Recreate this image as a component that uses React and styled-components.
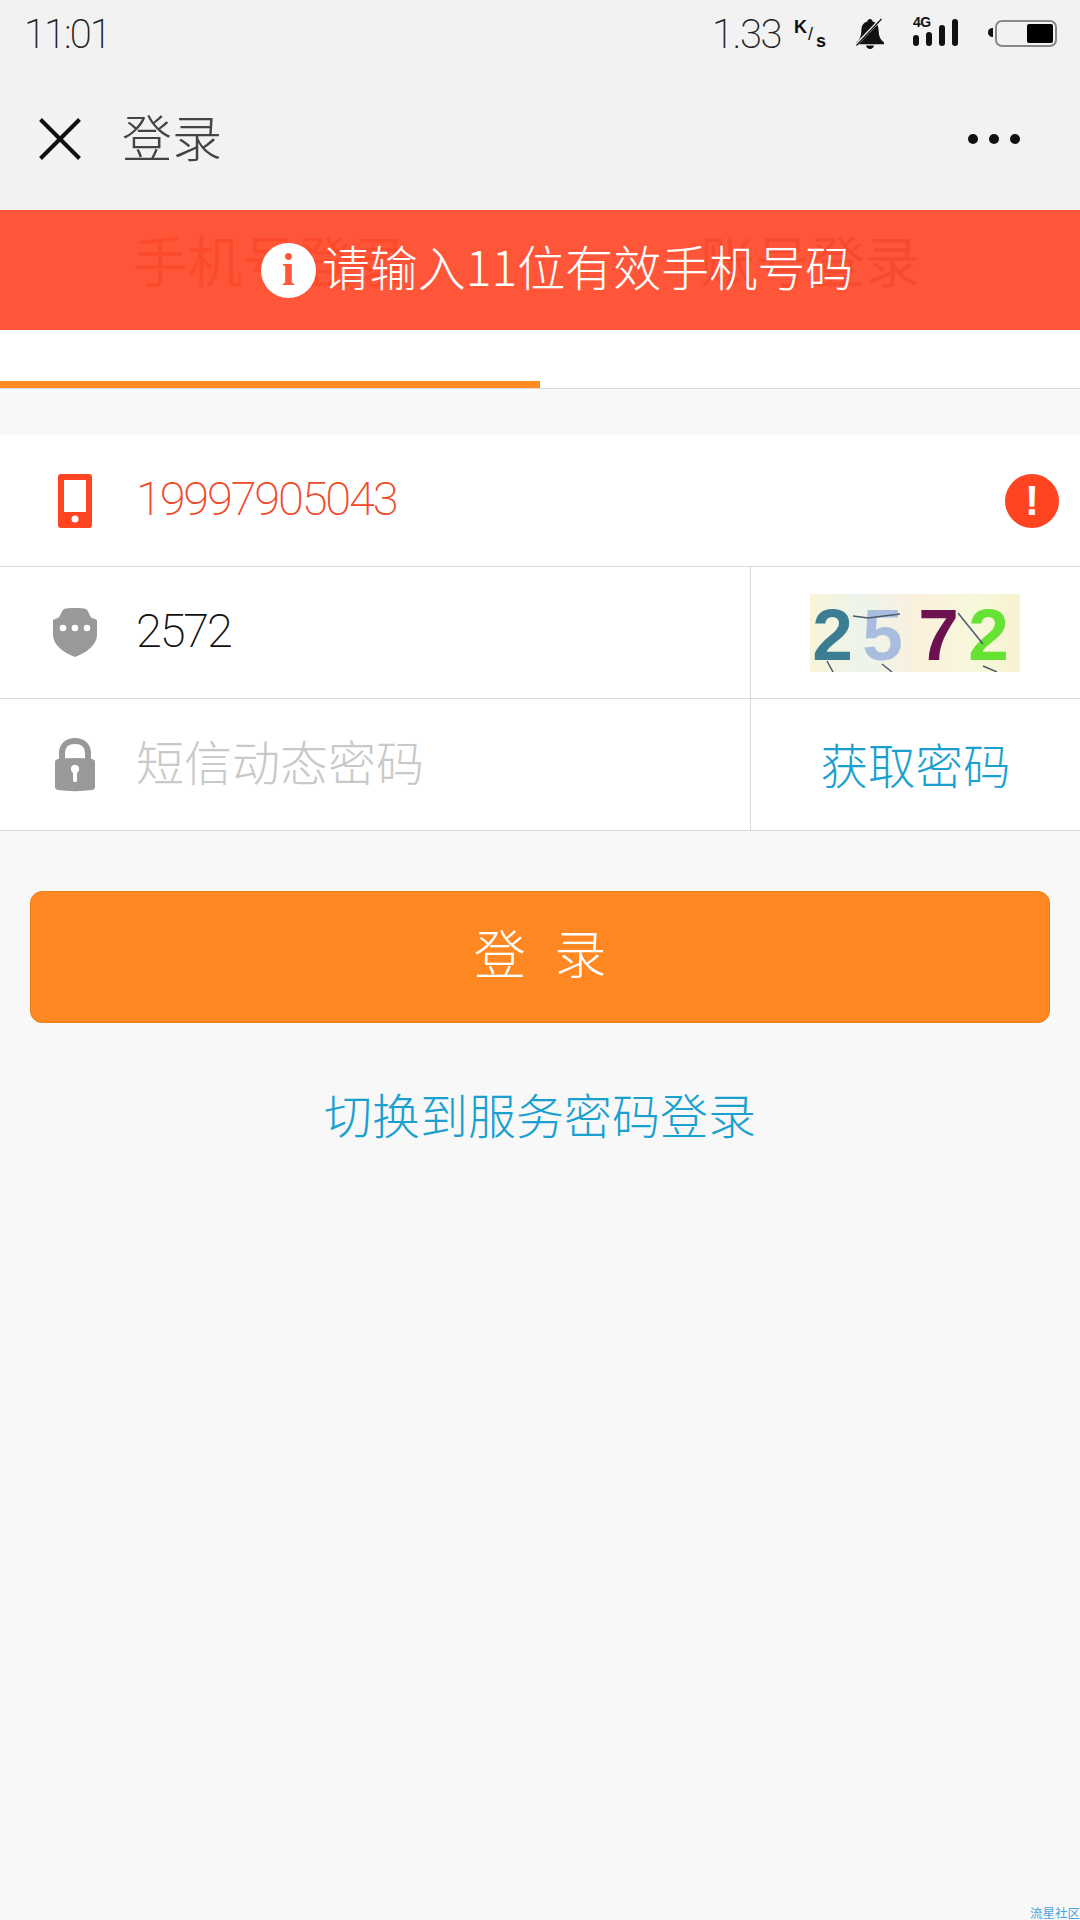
import React from "react";
import styled, { createGlobalStyle } from "styled-components";

const CJK = `"Noto Sans CJK SC", "Noto Sans", sans-serif`;
const NUM = `Roboto, "Liberation Sans", sans-serif`;

const Global = createGlobalStyle`
  html, body { margin: 0; padding: 0; background: #f8f8f8; }
  * { box-sizing: border-box; }
`;

const Page = styled.div`
  width: 1080px;
  height: 1920px;
  position: relative;
  overflow: hidden;
  background: #f8f8f8;
  font-family: ${CJK};
`;

const Header = styled.header`
  height: 210px;
  background: #f2f2f2;
`;

const StatusBar = styled.div`
  height: 68px;
  padding: 0 23px 0 24px;
  display: flex;
  align-items: center;
  justify-content: space-between;
`;

const Clock = styled.span`
  font-family: ${NUM};
  font-weight: 200;
  font-size: 40px;
  letter-spacing: -2px;
  color: #222;
`;

const StatusGroup = styled.div`
  display: flex;
  align-items: center;
`;

const Speed = styled.span`
  font-family: ${NUM};
  font-weight: 200;
  font-size: 40px;
  letter-spacing: -1.5px;
  color: #222;
  margin-right: 13px;
`;

const Unit = styled.span`
  position: relative;
  width: 36px;
  height: 30px;
  margin-right: 25px;
  font-family: "Liberation Sans", sans-serif;
  font-weight: 700;
  color: #111;
`;

const UnitPart = styled.span`
  position: absolute;
  left: ${(p) => p.$x}px;
  top: ${(p) => p.$y}px;
  font-size: 18px;
  line-height: 18px;
  font-weight: ${(p) => p.$w || 700};
`;

const Signal = styled.div`
  position: relative;
  width: 47px;
  height: 32px;
  margin: 0 35px 8px 28px;
  display: flex;
  align-items: flex-end;
  gap: 7px;
`;

const SignalBar = styled.i`
  display: block;
  width: 6px;
  height: ${(p) => p.$h}px;
  border-radius: 3px;
  background: #111;
`;

const FourG = styled.span`
  position: absolute;
  left: 0;
  top: 1px;
  font-family: "Liberation Sans", sans-serif;
  font-weight: 700;
  font-size: 14px;
  line-height: 14px;
  letter-spacing: -0.5px;
  color: #111;
`;

const Battery = styled.div`
  position: relative;
  width: 62px;
  height: 27px;
  margin-bottom: 2px;
  padding: 2px;
  border: 2px solid #888;
  border-radius: 7px;
  display: flex;
  justify-content: flex-end;

  &::before {
    content: "";
    position: absolute;
    left: -9px;
    top: 6px;
    width: 5px;
    height: 9px;
    border-radius: 5px 0 0 5px;
    background: #111;
  }
`;

const BatteryFill = styled.div`
  width: 26px;
  height: 100%;
  border-radius: 2px;
  background: #000;
`;

const NavBar = styled.nav`
  height: 142px;
  padding: 0 60px 0 39px;
  display: flex;
  align-items: center;
`;

const Title = styled.h1`
  margin: -9px 0 0 41px;
  flex: 1;
  font-size: 50px;
  font-weight: 300;
  line-height: 60px;
  color: #444;
`;

const Dots = styled.div`
  display: flex;
  gap: 11px;
`;

const Dot = styled.i`
  display: block;
  width: 10px;
  height: 10px;
  border-radius: 50%;
  background: #111;
`;

const Tabs = styled.div`
  height: 179px;
  background: #fff;
  border-bottom: 1px solid #dcdcdc;
  display: flex;
`;

const Tab = styled.div`
  width: 540px;
  height: 178px;
  padding-top: 9px;
  text-align: center;
  font-size: 55px;
  line-height: 78px;
  font-weight: 400;
  color: ${(p) => (p.$active ? "#b83000" : "#444")};
  border-bottom: ${(p) => (p.$active ? "7px solid #ff8a22" : "0")};
`;

const Toast = styled.div`
  position: absolute;
  left: 0;
  top: 210px;
  width: 1080px;
  height: 120px;
  background: rgba(255, 77, 46, 0.95);
  display: flex;
  align-items: center;
  justify-content: center;
  gap: 6px;
  padding-left: 34px;
`;

const ToastIcon = styled.span`
  width: 55px;
  height: 55px;
  border-radius: 50%;
  background: #fff;
  color: #ff5638;
  display: flex;
  align-items: center;
  justify-content: center;
  font-family: "Liberation Serif", serif;
  font-weight: 700;
  font-size: 46px;
  line-height: 1;
`;

const ToastText = styled.span`
  margin-top: -11px;
  font-size: 48px;
  font-weight: 300;
  line-height: 60px;
  color: #fff;
`;

const Form = styled.section`
  margin-top: 46px;
  background: #fff;
`;

const Row = styled.div`
  height: 132px;
  border-bottom: 1px solid #d9d9d9;
  display: flex;
  align-items: stretch;
`;

const IconCell = styled.div`
  width: 136px;
  padding-left: 14px;
  display: flex;
  align-items: center;
  justify-content: center;
  flex: none;
`;

const Value = styled.div`
  flex: 1;
  display: flex;
  align-items: center;
  font-family: ${(p) => (p.$cjk ? CJK : NUM)};
  font-weight: 200;
  font-size: ${(p) => (p.$cjk ? "48px" : "47px")};
  letter-spacing: ${(p) => (p.$cjk ? "0" : "-2.2px")};
  padding-bottom: ${(p) => (p.$cjk ? "10px" : "4px")};
  color: ${(p) => p.$color};
`;

const SideCell = styled.div`
  width: 330px;
  flex: none;
  border-left: 1px solid #d9d9d9;
  display: flex;
  align-items: center;
  justify-content: center;
`;

const AlertBadge = styled.span`
  width: 54px;
  height: 54px;
  margin-right: 21px;
  align-self: center;
  flex: none;
  border-radius: 50%;
  background: #ff4422;
  color: #fff;
  display: flex;
  align-items: center;
  justify-content: center;
  font-family: "Liberation Sans", sans-serif;
  font-weight: 700;
  font-size: 42px;
  line-height: 1;
`;

const Captcha = styled.div`
  position: relative;
  width: 210px;
  height: 78px;
  margin-right: 2px;
  padding-top: 3px;
  background: linear-gradient(90deg, #f8f4d8, #edf4ec 24%, #fbf0dc 52%, #f6f8dc 78%, #f8f2cf);
  display: flex;
  align-items: center;
  justify-content: flex-start;
`;

const CaptchaDigit = styled.span`
  width: ${(p) => p.$w}px;
  flex: none;
  text-align: center;
  font-family: "Liberation Sans", sans-serif;
  font-weight: 700;
  font-size: 73px;
  line-height: 73px;
  color: ${(p) => p.$color};
`;

const CaptchaNoise = styled.svg`
  position: absolute;
  inset: 0;
`;

const SmsLink = styled.span`
  margin-top: -2px;
  font-size: 47.500px;
  font-weight: 300;
  line-height: 60px;
  color: #1aa0cf;
`;

const Actions = styled.div`
  padding: 60px 30px 0;
  display: flex;
  flex-direction: column;
  align-items: stretch;
`;

const LoginButton = styled.button`
  height: 132px;
  padding: 0 0 12px;
  border: 1px solid #e8801c;
  border-radius: 12px;
  background: #ff8822;
  color: #fff;
  font-family: ${CJK};
  font-weight: 300;
  font-size: 52px;
  word-spacing: 17px;
  white-space: pre;
`;

const SwitchLink = styled.div`
  margin-top: 59px;
  text-align: center;
  font-size: 48px;
  font-weight: 300;
  line-height: 62px;
  color: #1aa0cf;
`;

const Watermark = styled.span`
  position: absolute;
  right: 0;
  bottom: 0;
  font-size: 12.500px;
  line-height: 14px;
  color: #4aa3e0;
`;

const CloseIcon = () => (
  <svg width="42" height="42" viewBox="0 0 42 42">
    <path d="M1.500 1.500 40.500 40.500M40.500 1.500 1.500 40.500" stroke="#111" strokeWidth="4" fill="none" />
  </svg>
);

const BellOffIcon = () => (
  <svg width="30" height="32" viewBox="0 0 30 32">
    <path
      d="M15 1c-1.500 0-2.500 1-2.600 2.400C8 4.600 6.400 8 6.400 12.500c0 5.500-1.800 9.500-5.400 12v1.700h28v-1.700c-3.600-2.500-5.400-6.500-5.400-12 0-4.500-1.600-7.900-6-9.100C17.500 2 16.500 1 15 1z"
      fill="#111"
    />
    <path d="M11 27.500h8c-.4 2-2 3.500-4 3.500s-3.600-1.500-4-3.500z" fill="#111" />
    <path d="M1 27 26 1" stroke="#f2f2f2" strokeWidth="3" />
    <path d="M1.500 27.500 26.500 1" stroke="#111" strokeWidth="1.200" />
  </svg>
);

const PhoneIcon = () => (
  <svg width="34" height="54" viewBox="0 0 34 54">
    <rect x="0" y="0" width="34" height="54" rx="3" fill="#ff4422" />
    <rect x="6" y="6" width="22" height="32" fill="#fff" />
    <circle cx="17" cy="45" r="3.500" fill="#fff" />
  </svg>
);

const ShieldIcon = () => (
  <svg width="44" height="49" viewBox="0 0 44 49">
    <path
      d="M22 0C27 0 31 0 33 1C36 3 36 8 39 10C41 11 43 11 44 12V27C44 37 33 45 22 49C11 45 0 37 0 27V12C1 11 3 11 5 10C8 8 8 3 11 1C13 0 17 0 22 0Z"
      fill="#999"
    />
    <circle cx="10" cy="20" r="3.300" fill="#fff" />
    <circle cx="22" cy="20" r="3.300" fill="#fff" />
    <circle cx="34" cy="20" r="3.300" fill="#fff" />
  </svg>
);

const LockIcon = () => (
  <svg width="40" height="54" viewBox="0 0 40 54">
    <path d="M7 24V15C7 7 13 3 20 3s13 4 13 12v9" fill="none" stroke="#999" strokeWidth="6" />
    <path
      d="M3 21c11-1.500 23-1.500 34 0 2 .3 3 1.500 3 3v25c0 1.500-1 2.700-3 3-11 1.500-23 1.500-34 0-2-.3-3-1.500-3-3V24c0-1.500 1-2.700 3-3z"
      fill="#999"
    />
    <circle cx="20" cy="31" r="4.200" fill="#fff" />
    <rect x="18" y="32" width="4" height="12" rx="1.500" fill="#fff" />
  </svg>
);

export default function App() {
  return (
    <Page>
      <Global />
      <Header>
        <StatusBar>
          <Clock>11:01</Clock>
          <StatusGroup>
            <Speed>1.33</Speed>
            <Unit>
              <UnitPart $x={0} $y={-1}>K</UnitPart>
              <UnitPart $x={14} $y={6} $w={400}>/</UnitPart>
              <UnitPart $x={22} $y={13}>s</UnitPart>
            </Unit>
            <BellOffIcon />
            <Signal>
              <FourG>4G</FourG>
              <SignalBar $h={11} />
              <SignalBar $h={14} />
              <SignalBar $h={21} />
              <SignalBar $h={27} />
            </Signal>
            <Battery>
              <BatteryFill />
            </Battery>
          </StatusGroup>
        </StatusBar>
        <NavBar>
          <CloseIcon />
          <Title>登录</Title>
          <Dots>
            <Dot />
            <Dot />
            <Dot />
          </Dots>
        </NavBar>
      </Header>
      <Tabs>
        <Tab $active>手机号登录</Tab>
        <Tab>账号登录</Tab>
      </Tabs>
      <Toast>
        <ToastIcon>i</ToastIcon>
        <ToastText>请输入11位有效手机号码</ToastText>
      </Toast>
      <Form>
        <Row>
          <IconCell>
            <PhoneIcon />
          </IconCell>
          <Value $color="#f0492a">19997905043</Value>
          <AlertBadge>!</AlertBadge>
        </Row>
        <Row>
          <IconCell>
            <ShieldIcon />
          </IconCell>
          <Value $color="#111">2572</Value>
          <SideCell>
            <Captcha>
              <CaptchaDigit $w={46} $color="#3b7d93">2</CaptchaDigit>
              <CaptchaDigit $w={54} $color="#a9bedf">5</CaptchaDigit>
              <CaptchaDigit $w={58} $color="#6d1150">7</CaptchaDigit>
              <CaptchaDigit $w={42} $color="#66e234">2</CaptchaDigit>
              <CaptchaNoise width="210" height="78" viewBox="0 0 210 78">
                <path d="M43 22 58 24 90 20M148 19 173 50M17 67 23 78M72 70 82 78M173 72 187 78" stroke="#4a5a6a" strokeWidth="1.500" fill="none" />
              </CaptchaNoise>
            </Captcha>
          </SideCell>
        </Row>
        <Row>
          <IconCell>
            <LockIcon />
          </IconCell>
          <Value $cjk $color="#c9c9c9">短信动态密码</Value>
          <SideCell>
            <SmsLink>获取密码</SmsLink>
          </SideCell>
        </Row>
      </Form>
      <Actions>
        <LoginButton>登 录</LoginButton>
        <SwitchLink>切换到服务密码登录</SwitchLink>
      </Actions>
      <Watermark>流星社区</Watermark>
    </Page>
  );
}
